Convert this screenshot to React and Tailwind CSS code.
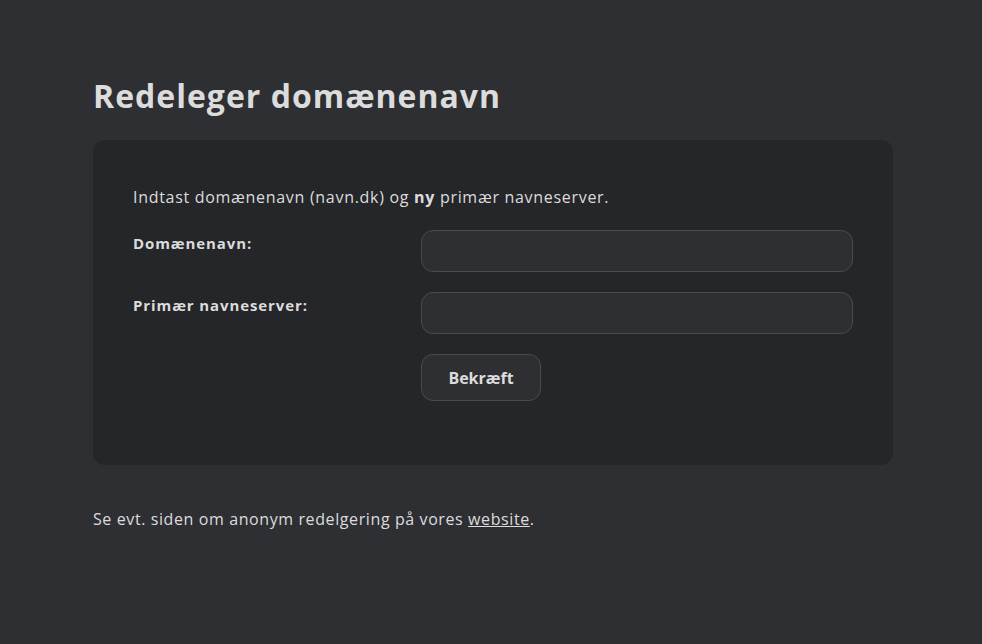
export default function App() {
  return (
    <div className="min-h-[644px] w-full bg-[#2e2f33] text-[#dcdcdc]" style={{ fontFamily: '"Open Sans", "DejaVu Sans", sans-serif' }}>
      <div className="ml-[93px] w-[800px] pt-[74px]">
        <h1 className="text-[32px] font-bold leading-[44px] tracking-[1px] text-[#dcdcdc]">Redeleger domænenavn</h1>
        <div className="mt-[22px] rounded-xl bg-[#252629] px-10 pt-[45px] pb-[64px]">
          <p className="text-[16px] leading-6 tracking-[0.7px]">Indtast domænenavn (navn.dk) og <b>ny</b> primær navneserver.</p>
          <div className="mt-[21px] grid grid-cols-[288px_1fr] gap-y-5">
            <label className="pt-[1px] text-[15px] font-bold leading-6 tracking-[0.9px]">Domænenavn:</label>
            <input className="h-[42px] rounded-xl border border-[#4a4b4f] bg-[#2e2f33] px-4 text-[15px] outline-none" />
            <label className="pt-[1px] text-[15px] font-bold leading-6 tracking-[0.9px]">Primær navneserver:</label>
            <input className="h-[42px] rounded-xl border border-[#4a4b4f] bg-[#2e2f33] px-4 text-[15px] outline-none" />
            <div />
            <div>
              <button className="h-[47px] w-[120px] rounded-xl border border-[#4a4b4f] bg-[#2e2f33] text-[16px] font-bold text-[#dcdcdc]">Bekræft</button>
            </div>
          </div>
        </div>
        <p className="mt-[42px] text-[16px] leading-6 tracking-[0.6px]">
          Se evt. siden om anonym redelgering på vores <a className="underline" href="#">website</a>.
        </p>
      </div>
    </div>
  );
}
